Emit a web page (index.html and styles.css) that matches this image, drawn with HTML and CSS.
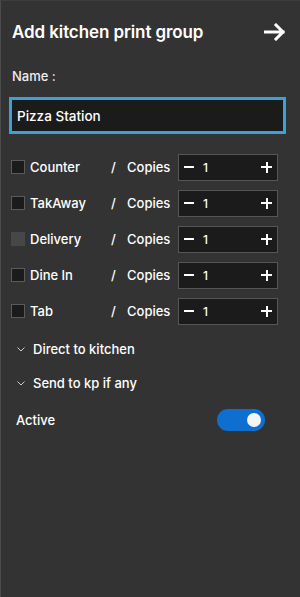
FILE: index.html
```html
<!DOCTYPE html>
<html lang="en">
<head>
  <meta charset="UTF-8">
  <meta name="viewport" content="width=device-width, initial-scale=1.0">
  <title>Add kitchen print group</title>
  <link rel="stylesheet" href="styles.css">
</head>
<body>
  <div class="panel">
    <div class="header">
      <h1>Add kitchen print group</h1>
      <svg class="arrow" width="22" height="18" viewBox="0 0 22 18">
        <path d="M1 9 H19 M12 2 L19 9 L12 16" fill="none" stroke="#fff" stroke-width="3" stroke-linecap="square"/>
      </svg>
    </div>

    <label class="name-label">Name :</label>
    <div class="name-input">Pizza Station</div>

    <div class="rows">
      <div class="row">
        <span class="check"></span>
        <span class="type">Counter</span>
        <span class="slash">/</span>
        <span class="copies">Copies</span>
        <div class="stepper"><span class="minus"></span><span class="count">1</span><span class="plus"></span></div>
      </div>
      <div class="row">
        <span class="check"></span>
        <span class="type">TakAway</span>
        <span class="slash">/</span>
        <span class="copies">Copies</span>
        <div class="stepper"><span class="minus"></span><span class="count">1</span><span class="plus"></span></div>
      </div>
      <div class="row">
        <span class="check disabled"></span>
        <span class="type">Delivery</span>
        <span class="slash">/</span>
        <span class="copies">Copies</span>
        <div class="stepper"><span class="minus"></span><span class="count">1</span><span class="plus"></span></div>
      </div>
      <div class="row">
        <span class="check"></span>
        <span class="type">Dine In</span>
        <span class="slash">/</span>
        <span class="copies">Copies</span>
        <div class="stepper"><span class="minus"></span><span class="count">1</span><span class="plus"></span></div>
      </div>
      <div class="row">
        <span class="check"></span>
        <span class="type">Tab</span>
        <span class="slash">/</span>
        <span class="copies">Copies</span>
        <div class="stepper"><span class="minus"></span><span class="count">1</span><span class="plus"></span></div>
      </div>
    </div>

    <div class="expander">
      <svg width="8" height="5" viewBox="0 0 8 5"><path d="M0.5 0.5 L4 4 L7.5 0.5" fill="none" stroke="#ccc" stroke-width="1"/></svg>
      <span>Direct to kitchen</span>
    </div>
    <div class="expander">
      <svg width="8" height="5" viewBox="0 0 8 5"><path d="M0.5 0.5 L4 4 L7.5 0.5" fill="none" stroke="#ccc" stroke-width="1"/></svg>
      <span>Send to kp if any</span>
    </div>

    <div class="active-row">
      <span>Active</span>
      <div class="toggle on"><span class="knob"></span></div>
    </div>
  </div>
</body>
</html>
```

FILE: styles.css
```css
* {
  margin: 0;
  padding: 0;
  box-sizing: border-box;
}

html, body {
  height: 100%;
}

body {
  font-family: 'Inter', 'Open Sans', sans-serif;
  background: #333333;
  color: #ffffff;
}

.panel {
  height: 100%;
  border-left: 1px solid #4c4c4c;
  border-top: 1px solid #3d3d3d;
  padding: 0 14px 0 8px;
}

.header {
  display: flex;
  align-items: center;
  justify-content: space-between;
  height: 59px;
  padding: 2px 0 0 3px;
}

.header h1 {
  font-size: 17px;
  font-weight: 600;
  letter-spacing: -0.1px;
}

.name-label {
  display: block;
  font-size: 13px;
  font-weight: 500;
  color: #eeeeee;
  margin: 8px 0 0 3px;
}

.name-input {
  margin-top: 13px;
  height: 37px;
  border: 3px solid #3aa2d9;
  background: #1b1b1b;
  font-size: 13.5px;
  font-weight: 500;
  padding-left: 5px;
  display: flex;
  align-items: center;
}

.rows {
  margin-top: 20px;
  display: flex;
  flex-direction: column;
  gap: 10px;
}

.row {
  display: flex;
  align-items: center;
  height: 26px;
  padding-left: 2px;
  font-size: 13px;
  font-weight: 500;
}

.check {
  width: 14px;
  height: 14px;
  border: 1px solid #5a5a5a;
  background: #1b1b1b;
}

.check.disabled {
  background: #474747;
  border-color: #474747;
}

.type {
  margin-left: 5px;
  width: 81px;
}

.slash {
  width: 16px;
}

.copies {
  width: 51px;
}

.stepper {
  width: 100px;
  height: 27px;
  border: 1px solid #555555;
  background: #1b1b1b;
  display: flex;
  align-items: center;
  padding: 0 5px;
}

.minus {
  width: 10px;
  height: 2px;
  background: #ffffff;
}

.count {
  margin-left: 9px;
  font-size: 12px;
  color: #ffffff;
  flex: 1;
}

.plus {
  width: 11px;
  height: 11px;
  background:
    linear-gradient(#fff, #fff) center / 11px 2px no-repeat,
    linear-gradient(#fff, #fff) center / 2px 11px no-repeat;
}

.expander {
  display: flex;
  align-items: center;
  gap: 8px;
  font-size: 13px;
  font-weight: 500;
  padding-left: 8px;
  height: 34px;
}

.rows + .expander {
  margin-top: 8px;
}

.active-row {
  display: flex;
  align-items: center;
  justify-content: space-between;
  height: 24px;
  margin-top: 8px;
  padding-left: 7px;
  padding-right: 21px;
  font-size: 13px;
  font-weight: 500;
}

.toggle {
  width: 48px;
  height: 22px;
  border-radius: 11px;
  background: #0f6fd1;
  position: relative;
}

.knob {
  position: absolute;
  right: 4px;
  top: 4px;
  width: 14px;
  height: 14px;
  border-radius: 50%;
  background: #f4f4f4;
}
```
